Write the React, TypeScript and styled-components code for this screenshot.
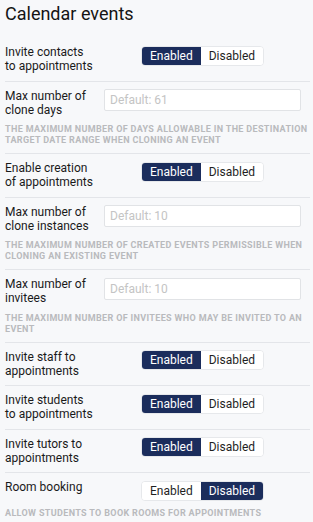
import React from "react";
import styled, { createGlobalStyle } from "styled-components";

const Global = createGlobalStyle`
  html, body { margin: 0; padding: 0; background: #f7f8fa; }
  body { font-family: Roboto, "Liberation Sans", sans-serif; color: #161616; }
`;

const Page = styled.div`
  padding: 0 3px 0 5px;
  width: 305px;
`;

const Title = styled.h1`
  margin: 3px 0 14px 0;
  font-size: 18px;
  line-height: 21px;
  font-weight: 400;
  color: #141414;
`;

const Row = styled.section<{ $last?: boolean }>`
  padding: 7px 0;
  border-bottom: ${(p) => (p.$last ? "none" : "1px solid #e3e5e9")};
`;

const Main = styled.div`
  display: grid;
  grid-template-columns: 90px 197px;
  column-gap: 9px;
  align-items: start;
`;

const Label = styled.div`
  font-size: 12px;
  line-height: 14.25px;
  color: #1a1a1a;
`;

const Control = styled.div`
  display: flex;
  justify-content: center;
  padding-top: 0.5px;
`;

const Input = styled.input`
  box-sizing: border-box;
  width: 197px;
  height: 22px;
  border: 1px solid #e1e3e6;
  border-radius: 2px;
  background: #ffffff;
  padding: 0 5px;
  font-family: Roboto, "Liberation Sans", sans-serif;
  font-size: 12px;
  color: #333;
  outline: none;
  &::placeholder { color: #c4c4c4; }
`;

const Help = styled.div`
  margin-top: 7px;
  font-size: 9px;
  line-height: 11px;
  letter-spacing: 0.35px;
  font-weight: 700;
  text-transform: uppercase;
  color: #b9babd;
`;

const Toggle = styled.div`
  display: flex;
  height: 20px;
  box-sizing: border-box;
  border: 1px solid #e6e8eb;
  border-radius: 4px;
  overflow: hidden;
  background: #ffffff;
`;

const Seg = styled.button<{ $on: boolean }>`
  border: none;
  margin: 0;
  padding: 0 8px;
  height: 100%;
  font-family: Roboto, "Liberation Sans", sans-serif;
  font-size: 12px;
  line-height: 18px;
  cursor: pointer;
  background: ${(p) => (p.$on ? "#1b2d5c" : "#ffffff")};
  color: ${(p) => (p.$on ? "#ffffff" : "#1f1f1f")};
`;

type Item =
  | { kind: "toggle"; label: string; enabled: boolean; help?: string }
  | { kind: "input"; label: string; placeholder: string; help?: string };

const items: Item[] = [
  { kind: "toggle", label: "Invite contacts to appointments", enabled: true },
  {
    kind: "input",
    label: "Max number of clone days",
    placeholder: "Default: 61",
    help: "The maximum number of days allowable in the destination target date range when cloning an event",
  },
  { kind: "toggle", label: "Enable creation of appointments", enabled: true },
  {
    kind: "input",
    label: "Max number of clone instances",
    placeholder: "Default: 10",
    help: "The maximum number of created events permissible when cloning an existing event",
  },
  {
    kind: "input",
    label: "Max number of invitees",
    placeholder: "Default: 10",
    help: "The maximum number of invitees who may be invited to an event",
  },
  { kind: "toggle", label: "Invite staff to appointments", enabled: true },
  { kind: "toggle", label: "Invite students to appointments", enabled: true },
  { kind: "toggle", label: "Invite tutors to appointments", enabled: true },
  {
    kind: "toggle",
    label: "Room booking",
    enabled: false,
    help: "Allow students to book rooms for appointments",
  },
];

const EnableToggle: React.FC<{ enabled: boolean }> = ({ enabled }) => (
  <Toggle>
    <Seg $on={enabled}>Enabled</Seg>
    <Seg $on={!enabled}>Disabled</Seg>
  </Toggle>
);

export default function App() {
  return (
    <>
      <Global />
      <Page>
        <Title>Calendar events</Title>
        {items.map((it, i) => (
          <Row key={i} $last={i === items.length - 1}>
            <Main>
              <Label>{it.label}</Label>
              <Control>
                {it.kind === "toggle" ? (
                  <EnableToggle enabled={it.enabled} />
                ) : (
                  <Input placeholder={it.placeholder} />
                )}
              </Control>
            </Main>
            {it.help && <Help>{it.help}</Help>}
          </Row>
        ))}
      </Page>
    </>
  );
}
